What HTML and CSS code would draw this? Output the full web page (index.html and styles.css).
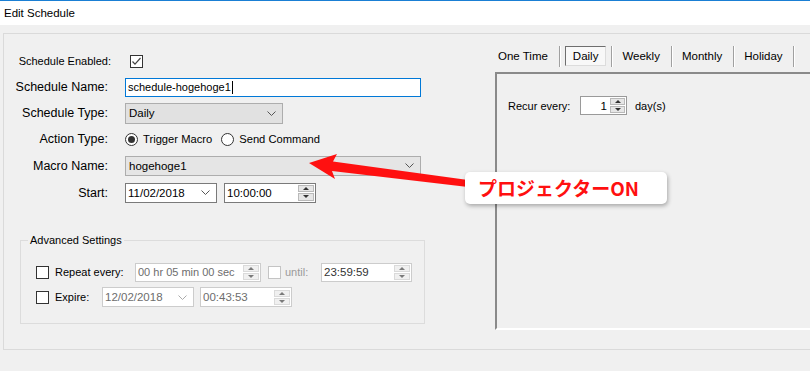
FILE: index.html
```html
<!DOCTYPE html>
<html lang="en">
<head>
    <meta charset="UTF-8">
    <meta name="viewport" content="width=device-width, initial-scale=1.0">
    <title>Edit Schedule</title>
    <link rel="stylesheet" href="styles.css">
</head>
<body>
    <div class="titlebar">Edit Schedule</div>
    <div class="window">
        <div class="frame">
            <div class="left">
                <div class="row">
                    <span class="lbl lbl-wide">Schedule Enabled:</span>
                    <span class="check">
                        <svg width="11" height="11" viewBox="0 0 11 11"><polyline points="1.5,5.5 4,8.2 9.5,2" fill="none" stroke="#444" stroke-width="1.2"/></svg>
                    </span>
                </div>
                <div class="row">
                    <span class="lbl">Schedule Name:</span>
                    <div class="textbox focus">schedule-hogehoge1<span class="caret"></span></div>
                </div>
                <div class="row">
                    <span class="lbl">Schedule Type:</span>
                    <div class="combo type-combo">
                        <span>Daily</span>
                        <svg class="chev" width="9" height="5" viewBox="0 0 9 5"><polyline points="0.5,0.5 4.5,4.5 8.5,0.5" fill="none" stroke="#555"/></svg>
                    </div>
                </div>
                <div class="row">
                    <span class="lbl">Action Type:</span>
                    <span class="radio on"></span>
                    <span class="radio-text">Trigger Macro</span>
                    <span class="radio second"></span>
                    <span class="radio-text">Send Command</span>
                </div>
                <div class="row tall">
                    <span class="lbl">Macro Name:</span>
                    <div class="combo macro-combo">
                        <span>hogehoge1</span>
                        <svg class="chev" width="9" height="5" viewBox="0 0 9 5"><polyline points="0.5,0.5 4.5,4.5 8.5,0.5" fill="none" stroke="#555"/></svg>
                    </div>
                </div>
                <div class="row tall">
                    <span class="lbl">Start:</span>
                    <div class="picker">
                        <span>11/02/2018</span>
                        <svg class="chev" width="9" height="5" viewBox="0 0 9 5"><polyline points="0.5,0.5 4.5,4.5 8.5,0.5" fill="none" stroke="#555"/></svg>
                    </div>
                    <div class="picker time">
                        <span>10:00:00</span>
                        <div class="spin"><span class="up"></span><span class="down"></span></div>
                    </div>
                </div>

                <fieldset class="advanced">
                    <legend>Advanced Settings</legend>
                    <div class="adv-row">
                        <span class="check plain"></span>
                        <span class="adv-lbl repeat-lbl">Repeat every:</span>
                        <div class="field off repeat-field">
                            <span>00 hr 05 min 00 sec</span>
                            <div class="spin"><span class="up"></span><span class="down"></span></div>
                        </div>
                        <span class="check plain disabled"></span>
                        <span class="adv-lbl until-lbl">until:</span>
                        <div class="field until-field">
                            <span>23:59:59</span>
                            <div class="spin"><span class="up"></span><span class="down"></span></div>
                        </div>
                    </div>
                    <div class="adv-row">
                        <span class="check plain"></span>
                        <span class="adv-lbl expire-lbl">Expire:</span>
                        <div class="field off date-field">
                            <span>12/02/2018</span>
                            <svg class="chev" width="9" height="5" viewBox="0 0 9 5"><polyline points="0.5,0.5 4.5,4.5 8.5,0.5" fill="none" stroke="#aaa"/></svg>
                        </div>
                        <div class="field off time-field">
                            <span>00:43:53</span>
                            <div class="spin"><span class="up"></span><span class="down"></span></div>
                        </div>
                    </div>
                </fieldset>
            </div>

            <div class="right">
                <div class="tabs">
                    <div class="tab first">One Time</div>
                    <div class="tab active"><span>Daily</span></div>
                    <div class="tab">Weekly</div>
                    <div class="tab">Monthly</div>
                    <div class="tab">Holiday</div>
                </div>
                <div class="tab-panel">
                    <div class="recur">
                        <span class="recur-lbl">Recur every:</span>
                        <div class="num">
                            <span>1</span>
                            <div class="spin"><span class="up"></span><span class="down"></span></div>
                        </div>
                        <span>day(s)</span>
                    </div>
                </div>
            </div>
        </div>
    </div>

    <svg class="arrow" width="810" height="371" viewBox="0 0 810 371">
        <polygon points="309,163 337,154 333,161.5 468,180 468,187 332,171 335,179" fill="#ff1010"/>
    </svg>
    <div class="callout">プロジェクターON</div>
</body>
</html>
```

FILE: styles.css
```css
* {
    margin: 0;
    padding: 0;
    box-sizing: border-box;
}

body {
    width: 810px;
    height: 371px;
    overflow: hidden;
    position: relative;
    background-color: #f0f0f0;
    font-family: "Liberation Sans", Arial, sans-serif;
    font-size: 11px;
    color: #000;
}

.titlebar {
    height: 25px;
    background: #fff;
    border-top: 1px solid #1a7fd4;
    padding-left: 4px;
    line-height: 24px;
    font-size: 11.5px;
}

.window {
    padding: 8px 0 0 3px;
}

.frame {
    display: flex;
    width: 840px;
    height: 317px;
    border: 1px solid #dadada;
}

/* left form */

.left {
    width: 491px;
    padding-top: 14px;
}

.row {
    display: flex;
    align-items: center;
    height: 26px;
}

.row.tall {
    height: 27px;
}

.lbl {
    width: 104px;
    margin-right: 17px;
    text-align: right;
    white-space: nowrap;
    font-size: 12.5px;
}

.lbl-wide {
    margin-right: 14px;
    width: 107px;
    font-size: 11px;
}

.check {
    width: 13px;
    height: 13px;
    border: 1px solid #333;
    background: #fff;
    display: flex;
    align-items: center;
    justify-content: center;
    margin-left: 5px;
}

.check.plain {
    margin-left: 0;
}

.check.disabled {
    border-color: #c4c4c4;
}

.textbox {
    width: 296px;
    height: 19px;
    border: 1px solid #0078d7;
    background: #fff;
    padding-left: 2px;
    display: flex;
    align-items: center;
    font-size: 11px;
}

.caret {
    display: inline-block;
    width: 1px;
    height: 13px;
    background: #000;
    margin-left: 1px;
}

.combo {
    height: 21px;
    background: #e1e1e1;
    border: 1px solid #adadad;
    display: flex;
    align-items: center;
    justify-content: space-between;
    padding: 0 6px 0 3px;
    font-size: 11.5px;
}

.type-combo {
    width: 158px;
}

.macro-combo {
    width: 296px;
    height: 20px;
    background: #e5e5e5;
}

.radio {
    width: 13px;
    height: 13px;
    border: 1px solid #333;
    border-radius: 50%;
    background: #fff;
    display: flex;
    align-items: center;
    justify-content: center;
}

.radio.on::after {
    content: '';
    width: 7px;
    height: 7px;
    border-radius: 50%;
    background: #333;
}

.radio.second {
    margin-left: 9px;
}

.radio-text {
    margin-left: 5px;
    font-size: 11.2px;
}

.picker {
    width: 92px;
    height: 20px;
    border: 1px solid #7a7a7a;
    background: #fff;
    display: flex;
    align-items: center;
    justify-content: space-between;
    padding: 0 6px 0 2px;
    font-size: 11.5px;
}

.picker.time {
    margin-left: 7px;
    padding-right: 1px;
}

.spin {
    width: 16px;
    height: 16px;
    display: flex;
    flex-direction: column;
    gap: 1px;
}

.spin span {
    flex: 1;
    background: #e6e6e6;
    border: 1px solid #b9b9b9;
    display: flex;
    align-items: center;
    justify-content: center;
}

.spin .up::after {
    content: '';
    border-left: 3px solid transparent;
    border-right: 3px solid transparent;
    border-bottom: 3px solid #333;
}

.spin .down::after {
    content: '';
    border-left: 3px solid transparent;
    border-right: 3px solid transparent;
    border-top: 3px solid #333;
}

/* advanced settings */

.advanced {
    width: 405px;
    margin: 27px 0 0 16px;
    border: 1px solid #dcdcdc;
    padding: 15px 0 16px 7px;
}

.advanced legend {
    padding: 0 2px;
    line-height: 14px;
}

.adv-row {
    display: flex;
    align-items: center;
    height: 20px;
    padding-left: 8px;
}

.adv-row + .adv-row {
    margin-top: 5px;
}

.adv-lbl {
    margin-left: 6px;
    white-space: nowrap;
}

.repeat-lbl {
    width: 80px;
}

.expire-lbl {
    width: 47px;
}

.until-lbl {
    width: 36px;
    margin-left: 4px;
    color: #9a9a9a;
}

.field {
    height: 19px;
    border: 1px solid #cccccc;
    background: #fff;
    display: flex;
    align-items: center;
    justify-content: space-between;
    padding: 0 1px 0 2px;
    color: #6d6d6d;
    white-space: nowrap;
    overflow: hidden;
    font-size: 11.5px;
}

.field .spin {
    height: 15px;
    flex-shrink: 0;
}

.field .spin span {
    background: #f0f0f0;
    border-color: #dadada;
}

.field .spin .up::after {
    border-bottom-color: #7a7a7a;
}

.field .spin .down::after {
    border-top-color: #7a7a7a;
}

.repeat-field {
    width: 126px;
    font-size: 11px;
}

.repeat-field + .check {
    margin-left: 7px;
}

.until-field {
    width: 91px;
    color: #333;
}

.date-field {
    width: 92px;
    height: 20px;
    padding-right: 6px;
}

.time-field {
    width: 92px;
    height: 20px;
    margin-left: 6px;
}

/* right tabs */

.right {
    flex: 1;
    padding-top: 10px;
}

.tabs {
    display: flex;
    align-items: center;
    height: 24px;
    font-size: 11.5px;
}

.tab {
    height: 21px;
    display: flex;
    align-items: center;
    padding: 0 11px 0 10px;
    border-right: 1px solid #a0a0a0;
    box-shadow: 1px 0 0 #fff;
}

.tab.first {
    padding-left: 3px;
}

.tab.active {
    padding: 0 5px;
}

.tab.active span {
    height: 20px;
    display: flex;
    align-items: center;
    padding: 0 7px;
    background: #f8f8f8;
    border: 1px solid;
    border-color: #6e6e6e #dcdcdc #dcdcdc #6e6e6e;
}

.tab:last-child {
    padding-right: 10px;
}

.tab-panel {
    margin-top: 4px;
    height: 258px;
    border: 2px solid;
    border-color: #8a8a8a #fff #fff #8a8a8a;
}

.recur {
    display: flex;
    align-items: center;
    margin-top: 22px;
    padding-left: 11px;
}

.recur-lbl {
    width: 63px;
    white-space: nowrap;
}

.num {
    width: 47px;
    height: 19px;
    margin: 0 8px 0 9px;
    border: 1px solid #9a9a9a;
    background: #fff;
    display: flex;
    align-items: center;
    justify-content: flex-end;
    gap: 3px;
    padding-right: 1px;
    font-size: 11.5px;
}

.num .spin {
    height: 15px;
    width: 15px;
}

/* annotation */

.arrow {
    position: absolute;
    left: 0;
    top: 0;
    pointer-events: none;
}

.callout {
    position: absolute;
    left: 465px;
    top: 172px;
    width: 202px;
    height: 32px;
    background: #fff;
    border-radius: 5px;
    box-shadow: 1px 2px 4px rgba(0, 0, 0, 0.3);
    color: #ff1010;
    font-family: "Noto Sans CJK JP", sans-serif;
    font-weight: bold;
    font-size: 19px;
    line-height: 32px;
    padding-left: 13px;
}
```
